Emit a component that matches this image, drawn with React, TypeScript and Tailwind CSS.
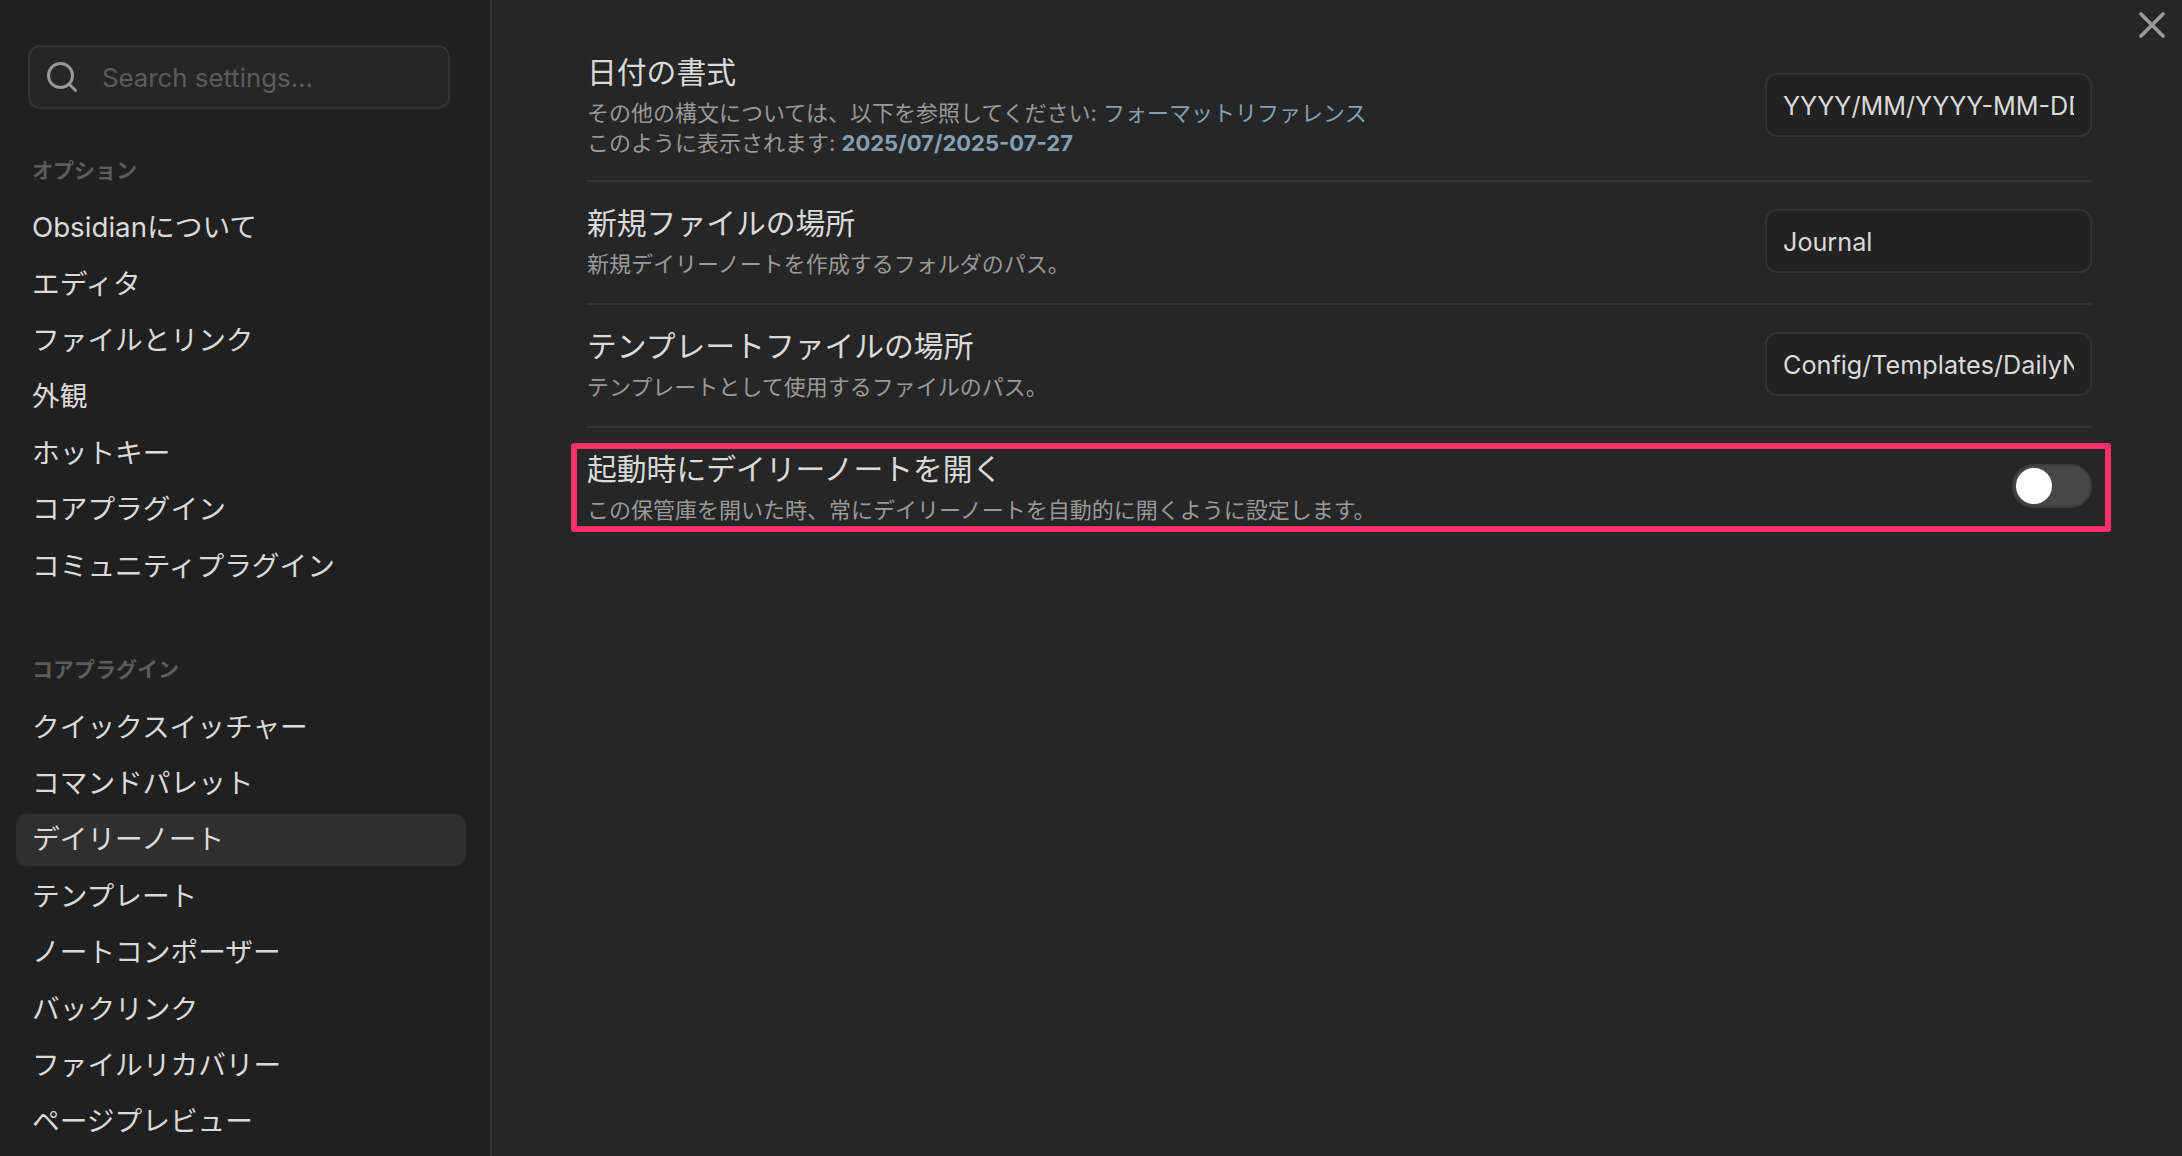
import { Search, X } from 'lucide-react';

const optionItems = ['Obsidianについて', 'エディタ', 'ファイルとリンク', '外観', 'ホットキー', 'コアプラグイン', 'コミュニティプラグイン'];
const pluginItems = ['クイックスイッチャー', 'コマンドパレット', 'デイリーノート', 'テンプレート', 'ノートコンポーザー', 'バックリンク', 'ファイルリカバリー', 'ページプレビュー'];

function NavItem({ label, active }: { label: string; active?: boolean }) {
  return (
    <div className={`h-[52px] mb-[4.4px] px-[16px] rounded-[10px] flex items-center text-[27.7px] text-[#dadada] ${active ? 'bg-[#2f2f2f]' : ''}`}>
      {label}
    </div>
  );
}

function SectionTitle({ label }: { label: string }) {
  return <div className="h-[30px] px-[16px] flex items-center text-[21px] font-bold text-[#5c5c5c]">{label}</div>;
}

function PathInput({ value }: { value: string }) {
  return (
    <input
      readOnly
      value={value}
      className="w-[327px] h-[64px] shrink-0 px-[16px] pt-[2px] rounded-[12px] border-2 border-[#333333] bg-[#222222] text-[25.2px] text-[#dadada] outline-none"
    />
  );
}

function SettingRow({ title, children, control, className }: { title: string; children: React.ReactNode; control: React.ReactNode; className: string }) {
  return (
    <div className={`flex items-center justify-between pt-[21px] ${className}`}>
      <div>
        <div className="h-[40px] leading-[40px] text-[29.8px] text-[#dadada]">{title}</div>
        <div className="mt-[6px] text-[22px] leading-[30px] text-[#999999]">{children}</div>
      </div>
      {control}
    </div>
  );
}

export default function App() {
  return (
    <div className="relative flex h-screen overflow-hidden bg-[#262626] font-['Inter','Noto_Sans_CJK_JP',sans-serif]">
      {/* Sidebar */}
      <aside className="w-[492px] shrink-0 h-full bg-[#202020] border-r-2 border-[#333333] pl-[16px] pr-[24px] pt-[45px] overflow-hidden">
        <div className="ml-[12px] w-[422px] h-[64px] rounded-[12px] border-2 border-[#333333] bg-[#262626] flex items-center pl-[14px]">
          <Search size={36} strokeWidth={2} className="text-[#999999] shrink-0" />
          <input placeholder="Search settings..." className="ml-[22px] pt-[3px] flex-1 min-w-0 bg-transparent text-[25.8px] text-[#dadada] placeholder:text-[#5c5c5c] outline-none" />
        </div>

        <div className="mt-[47px] mb-[16px]"><SectionTitle label="オプション" /></div>
        {optionItems.map((item) => <NavItem key={item} label={item} />)}

        <div className="mt-[62px] mb-[17px]"><SectionTitle label="コアプラグイン" /></div>
        {pluginItems.map((item) => <NavItem key={item} label={item} active={item === 'デイリーノート'} />)}
      </aside>

      {/* Settings */}
      <main className="flex-1 pt-[31px] pl-[95px] pr-[90px]">
        <SettingRow title="日付の書式" control={<PathInput value="YYYY/MM/YYYY-MM-DD" />} className="pb-[22px] border-b-2 border-[#333333]">
          <div>その他の構文については、以下を参照してください: <span className="text-[#83a0b3]">フォーマットリファレンス</span></div>
          <div>このように表示されます: <span className="font-bold text-[#83a0b3]">2025/07/2025-07-27</span></div>
        </SettingRow>
        <SettingRow title="新規ファイルの場所" control={<PathInput value="Journal" />} className="pb-[24px] border-b-2 border-[#333333]">
          新規デイリーノートを作成するフォルダのパス。
        </SettingRow>
        <SettingRow title="テンプレートファイルの場所" control={<PathInput value="Config/Templates/DailyNote" />} className="pb-[24px] border-b-2 border-[#333333]">
          テンプレートとして使用するファイルのパス。
        </SettingRow>
        <div className="relative">
          <SettingRow
            title="起動時にデイリーノートを開く"
            className="pb-[24px]"
            control={
              <div className="w-[80px] h-[44px] mb-[3px] rounded-full bg-[#474747] flex items-center pl-[4px] shadow-[inset_0_0_0_2px_#3c3c3c]">
                <div className="w-[36px] h-[36px] rounded-full bg-white" />
              </div>
            }
          >
            この保管庫を開いた時、常にデイリーノートを自動的に開くように設定します。
          </SettingRow>
          {/* Annotation frame */}
          <div className="absolute left-[-16px] right-[-19px] top-[15px] h-[89px] border-[6px] border-[#ff2f6e] rounded-[3px] pointer-events-none" />
        </div>
      </main>

      <X size={44} strokeWidth={2} className="absolute top-[3px] right-[8px] text-[#999999]" />
    </div>
  );
}
